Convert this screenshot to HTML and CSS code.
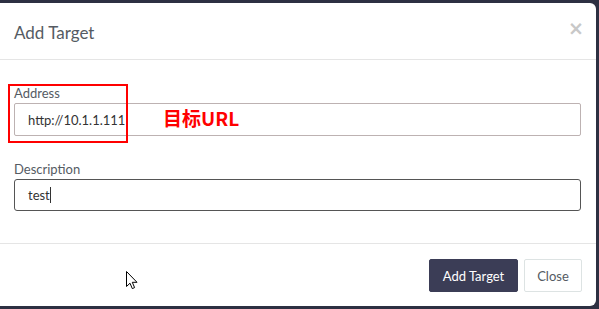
FILE: index.html
```html
<!DOCTYPE html>
<html>
<head>
<meta charset="utf-8">
<link rel="stylesheet" href="styles.css">
</head>
<body>
<div class="modal">
  <div class="modal-header">
    <h4 class="title">Add Target</h4>
    <span class="close">&times;</span>
  </div>
  <div class="modal-body">
    <div class="group group-address">
      <label class="label">Address</label>
      <div class="input">http://10.1.1.111</div>
      <div class="annot-box"></div>
      <div class="annot-text">目标URL</div>
    </div>
    <div class="group">
      <label class="label">Description</label>
      <div class="input input-focus">test<span class="caret"></span></div>
    </div>
  </div>
  <div class="modal-footer">
    <button class="btn btn-primary">Add Target</button>
    <button class="btn btn-default">Close</button>
    <svg class="cursor" width="12" height="20" viewBox="0 0 12 20"><path d="M0.5 0.5 L0.5 15.5 L4 12.2 L6.3 17.6 L8.6 16.6 L6.3 11.3 L11 11.3 Z" fill="#fff" stroke="#000" stroke-width="1" stroke-linejoin="round"/></svg>
  </div>
</div>
</body>
</html>
```
FILE: styles.css
```css
html, body { margin: 0; padding: 0; }
body {
  background: #2d3042;
  width: 599px;
  height: 309px;
  overflow: hidden;
  font-family: "Lato", "Open Sans", sans-serif;
}
.modal {
  margin-top: 3px;
  width: 596px;
  height: 303px;
  background: #fff;
  border-radius: 0 6px 6px 0;
  display: flex;
  flex-direction: column;
}
.modal-header {
  height: 57px;
  border-bottom: 1px solid #e5e5e5;
  display: flex;
  align-items: center;
  justify-content: space-between;
  padding: 2px 12px 0 14px;
  box-sizing: border-box;
  flex: none;
}
.title {
  margin: 0;
  font-size: 17px;
  font-weight: 400;
  color: #555b63;
}
.close {
  color: #c8c8c8;
  font-size: 19px;
  font-weight: 700;
  font-family: "DejaVu Sans", sans-serif;
  line-height: 1;
  margin-top: -8px;
}
.modal-body {
  flex: 1;
  padding: 25px 15px 0 14px;
  border-bottom: 1px solid #e5e5e5;
}
.group { position: relative; margin-bottom: 25px; }
.label {
  display: block;
  font-size: 13px;
  color: #555b63;
  line-height: 16px;
  margin-bottom: 2px;
}
.input {
  height: 33px;
  box-sizing: border-box;
  border: 1px solid #bdb2b2;
  border-radius: 2px;
  padding: 0 13px;
  font-size: 13px;
  color: #333;
  display: flex;
  align-items: center;
}
.input-focus { border-color: #555; border-radius: 3px; height: 32px; }
.caret {
  display: inline-block;
  width: 1px;
  height: 16px;
  background: #333;
}
.annot-box {
  position: absolute;
  left: -6px;
  top: -1px;
  width: 116px;
  height: 55px;
  border: 2px solid #f00;
}
.annot-text {
  position: absolute;
  left: 149px;
  top: 22px;
  font-family: "Noto Sans CJK SC", sans-serif;
  font-weight: 700;
  font-size: 19px;
  color: #f00;
  line-height: 22px;
}
.modal-footer {
  height: 62px;
  flex: none;
  display: flex;
  justify-content: flex-end;
  align-items: flex-start;
  padding: 15px 14px 0 0;
  box-sizing: border-box;
  gap: 6px;
  position: relative;
}
.btn {
  height: 33px;
  font-family: inherit;
  font-size: 13px;
  border-radius: 2px;
  padding: 0 12px;
  cursor: default;
}
.btn-primary {
  background: #3b3d56;
  color: #fff;
  border: 1px solid #3b3d56;
  width: 89px;
}
.btn-default {
  background: #fff;
  color: #555b63;
  border: 1px solid #dde3e3;
  width: 58px;
}
.cursor {
  position: absolute;
  left: 126px;
  top: 27px;
}
```
